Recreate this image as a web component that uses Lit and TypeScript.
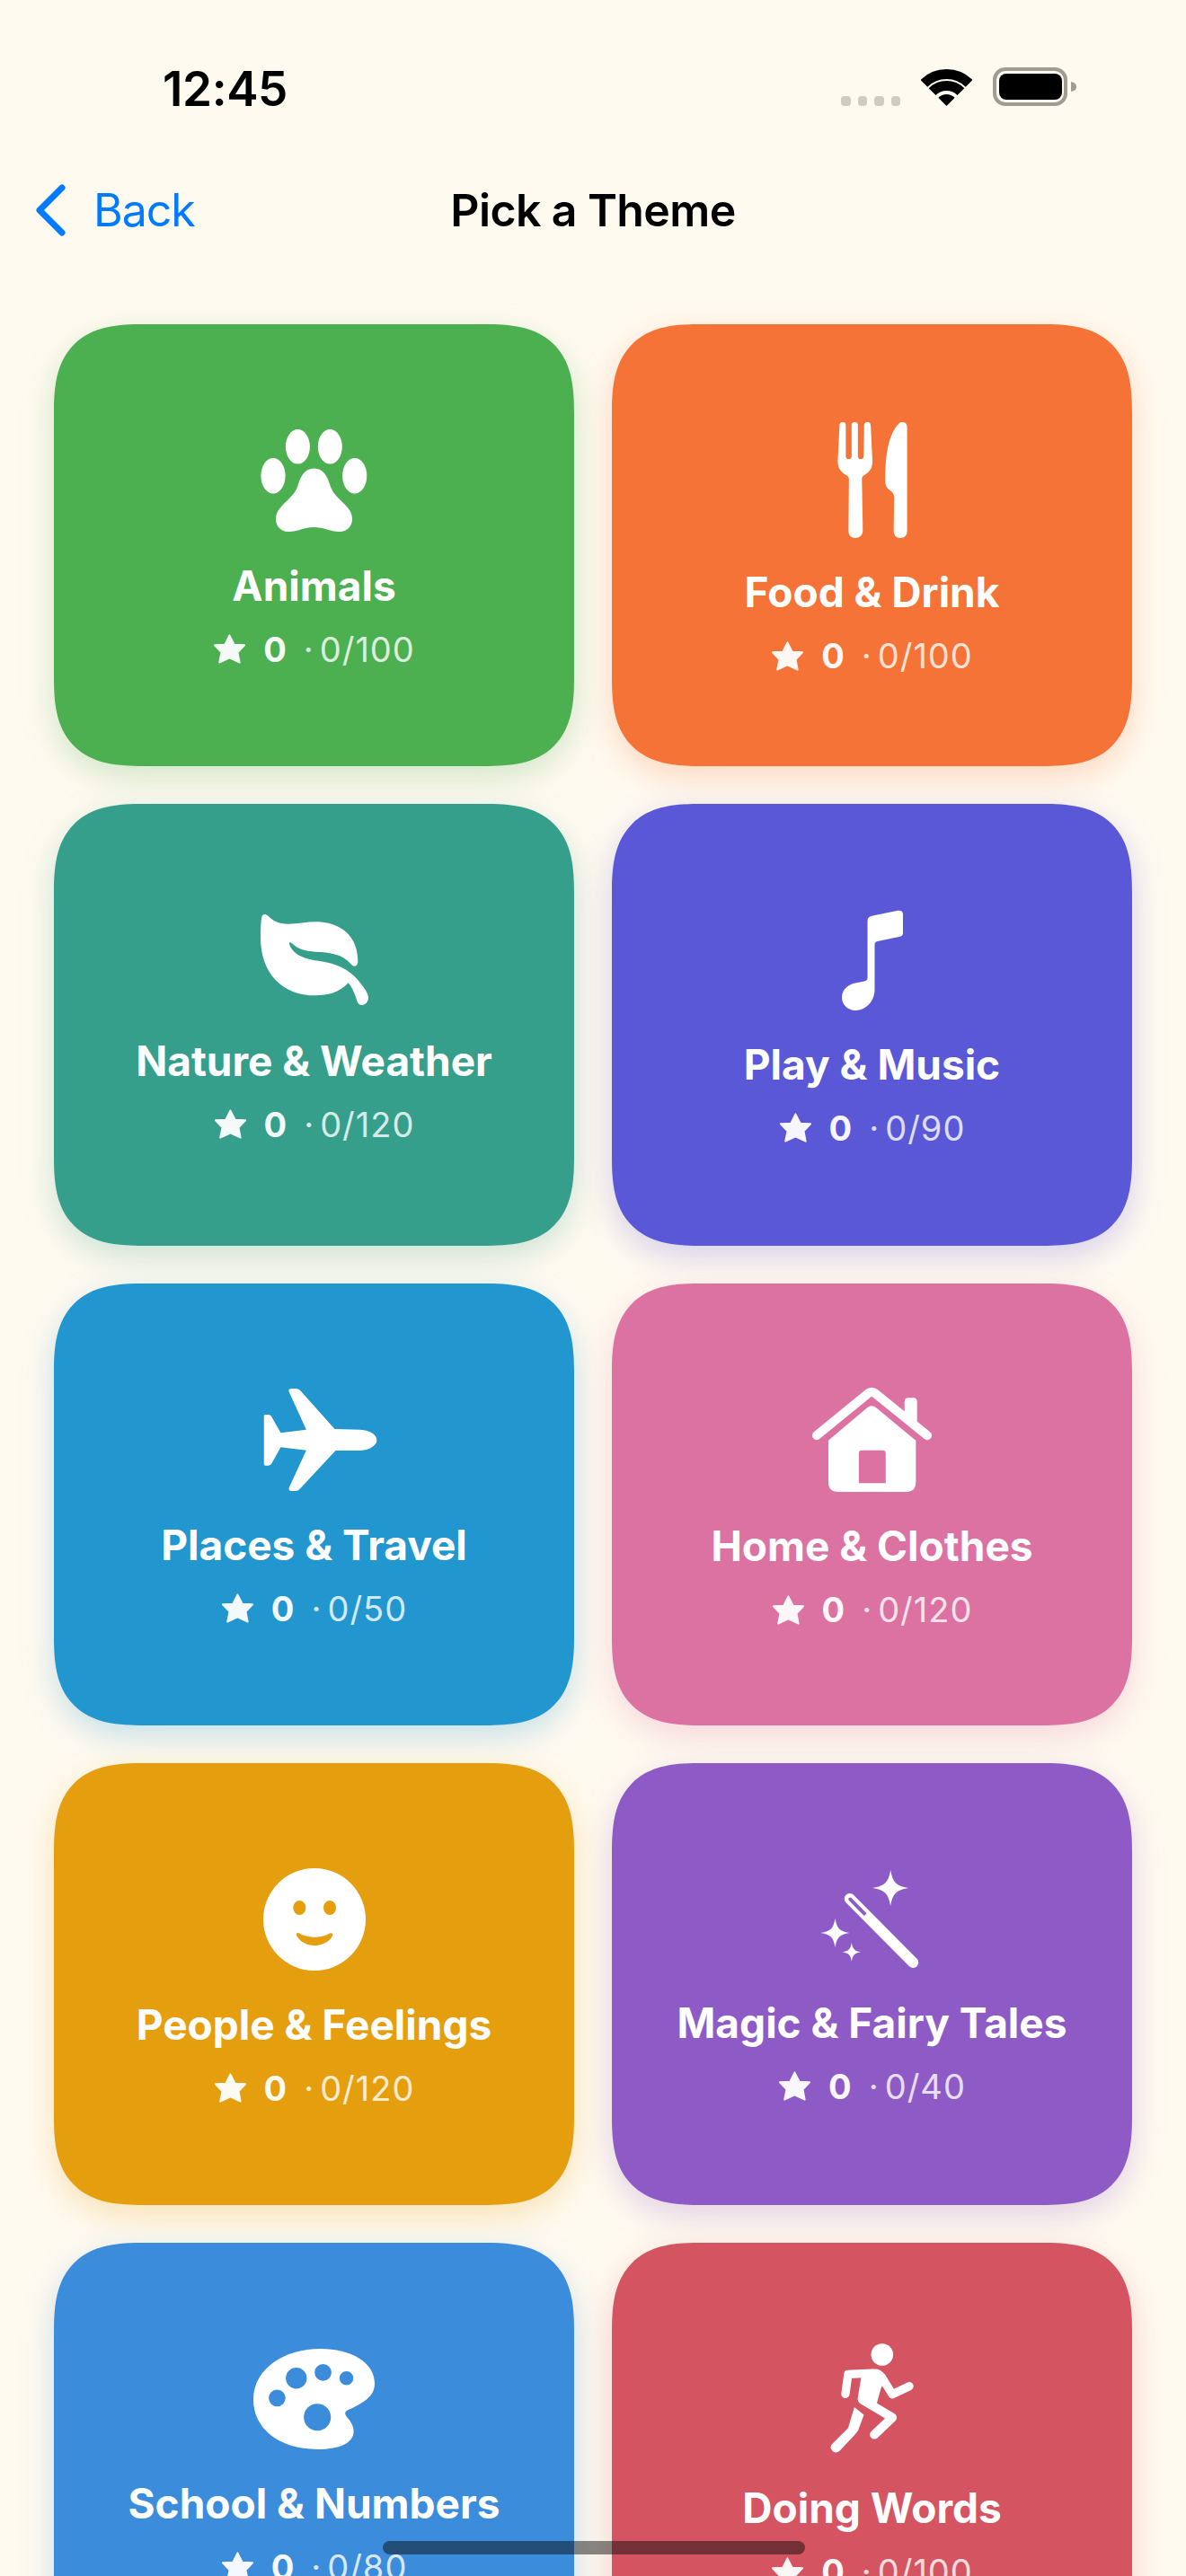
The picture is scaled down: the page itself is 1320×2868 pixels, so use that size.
import { LitElement, html, css, svg } from "lit";
import { customElement } from "lit/decorators.js";

const sparkle = (x: number, y: number, r: number) => {
  const a = r * 0.13, b = r * 0.3;
  return `M${x} ${y - r}C${x + a} ${y - b} ${x + b} ${y - a} ${x + r} ${y}C${x + b} ${y + a} ${x + a} ${y + b} ${x} ${y + r}C${x - a} ${y + b} ${x - b} ${y + a} ${x - r} ${y}C${x - b} ${y - a} ${x - a} ${y - b} ${x} ${y - r}Z`;
};
const circ = (x: number, y: number, r: number, ry = r) =>
  `M${x - r} ${y}A${r} ${ry} 0 1 0 ${x + r} ${y}A${r} ${ry} 0 1 0 ${x - r} ${y}Z`;

type Ic = { vb: string; w: number; h: number; dx?: number; art: unknown };

const ICONS: Record<string, Ic> = {
  paw: {
    vb: "0 0 119 114", w: 119, h: 114,
    art: svg`<ellipse cx="41.4" cy="19.3" rx="13.5" ry="19.3"/><ellipse cx="77.3" cy="19.3" rx="13.5" ry="19.3"/><ellipse cx="14" cy="51.7" rx="13.6" ry="19.7"/><ellipse cx="104.7" cy="51.7" rx="13.6" ry="19.7"/><path d="M59.5 43.5C70 43.5 74 52 77 61C79 68 82 72 88 78C95 85 102 90 102 100C102 108 96 114 88 114C78 114 70 109 59.5 109C49 109 41 114 31 114C23 114 17 108 17 100C17 90 24 85 31 78C37 72 40 68 42 61C45 52 49 43.5 59.5 43.5Z"/>`,
  },
  food: {
    vb: "0 0 77.5 129.5", w: 78, h: 129,
    art: svg`<path d="M2 3.5A3.5 3.5 0 0 1 9 3.5L9 38A3.2 3.2 0 0 0 15.5 38L15.5 3.5A3.5 3.5 0 0 1 22.5 3.5L22.5 38A3.2 3.2 0 0 0 29 38L29.5 3.5A3.6 3.6 0 0 1 36.8 3.5L38.8 44C38.8 52 35 56 30 59C28 60 27 61 27 64L28 121C28 126 25 129.5 19.5 129.5C14 129.5 12 126 12 121L12.5 64C12.5 61 11 60 9 59C4 56 0 52 0 44Z"/><path d="M72 0C75 0 77.5 2 77.5 5L77.5 122C77.5 126.5 74.5 129.5 70 129.5C65.5 129.5 62.5 126.5 62.5 122L63 84C63 80 61 78 58 76C54 73 53 70 53 64C53 50 54 35 57 24C59 15 65 4 68 2C69 .5 70.5 0 72 0Z"/>`,
  },
  leaf: {
    vb: "147 110 360 312", w: 120, h: 104,
    art: svg`<path d="M150 125C152 112 162 110 172 118C190 134 205 145 240 145C270 145 300 138 335 138C420 140 472 190 472 270C472 288 458 290 450 280C420 245 380 240 330 238C295 236 270 228 252 210C244 203 240 208 246 220C262 250 295 262 340 268C400 276 440 295 470 330C490 355 507 375 507 392C507 412 480 428 470 405C462 380 455 360 440 342C410 375 370 384 330 384C220 384 147 310 147 190C147 165 148 145 150 125Z"/>`,
  },
  music: {
    vb: "170 98 205 337", w: 68, h: 112,
    art: svg`<path d="M256 135C256 125 262 120 270 118L358 100C368 98 375 103 375 112L375 175C375 182 372 185 365 187L290 203C283 205 280 208 280 215L280 365C280 405 250 435 215 435C190 435 170 415 170 392C170 365 190 348 215 343L245 337C253 335 256 332 256 325Z"/>`,
  },
  plane: {
    vb: "98 78 378 342", w: 126, h: 114, dx: 6.5,
    art: svg`<path d="M182 88C180 80 186 78 195 78L205 78C212 78 218 82 222 86L335 213L420 215C455 216 476 235 476 250C476 265 455 284 420 285L338 285L220 412C216 417 210 420 204 420L192 420C184 420 180 416 183 408L240 284L155 274L125 327C122 333 118 335 112 335L105 335C100 335 98 332 98 328L98 172C98 167 100 165 105 165L112 165C118 165 122 167 125 173L155 226L240 215Z"/>`,
  },
  house: {
    vb: "71 75 400 352", w: 133, h: 117,
    art: svg`<path d="M86 238L258 97Q270 88 282 97L456 238" fill="none" stroke="#fff" stroke-width="30" stroke-linecap="round" stroke-linejoin="round"/><path d="M380 125Q380 112 393 112L409 112Q422 112 422 125L422 200L380 165Z"/><path fill-rule="evenodd" d="M125 255L255 145Q270 133 285 145L418 255L418 395Q418 427 385 427L158 427Q125 427 125 395ZM227 398L317 398L317 298Q317 288 307 288L237 288Q227 288 227 298Z"/>`,
  },
  smile: {
    vb: "98 60 342 342", w: 114, h: 114,
    art: svg`<path fill-rule="evenodd" d="${circ(269, 231, 171)}${circ(219, 192, 21, 24)}${circ(320, 192, 21, 24)}M208 282C208 276 214 275 220 278C240 288 255 290 269 290C285 290 300 288 318 278C325 275 331 277 330 284C320 305 295 318 269 318C243 318 218 305 208 282Z"/>`,
  },
  wand: {
    vb: "98 65 329 330", w: 110, h: 110, dx: -3,
    art: svg`<path fill-rule="evenodd" d="M207.7 147.3L420.7 362.3A18 18 0 0 1 395.3 387.7L182.3 172.7A18 18 0 0 1 207.7 147.3ZM201.2 157.8L252.2 209.8L243.8 218.2L192.8 166.2A6 6 0 0 1 201.2 157.8Z"/><path d="${sparkle(332, 125, 60)}"/><path d="${sparkle(147, 275, 48)}"/><path d="${sparkle(202, 339, 31)}"/>`,
  },
  palette: {
    vb: "66 45 404 335", w: 135, h: 112,
    art: svg`<path fill-rule="evenodd" d="M66 215C66 110 170 45 290 45C390 45 470 90 470 160C470 200 440 220 400 240C385 248 370 250 372 262C375 275 400 290 400 320C400 360 350 380 280 380C150 380 66 310 66 215Z${circ(209, 143, 35)}${circ(298, 124, 28)}${circ(376, 143, 23)}${circ(145, 209, 28)}${circ(279, 273, 45)}"/>`,
  },
  run: {
    vb: "132 57 280 369", w: 93, h: 123,
    art: svg`<circle cx="306" cy="94" r="37"/><g fill="none" stroke="#fff" stroke-linecap="round" stroke-linejoin="round"><path d="M183 226L192 160L275 156" stroke-width="28"/><path d="M305 170L340 227L397 200" stroke-width="28"/><path d="M240 245L340 305L280 362" stroke-width="30"/></g><path d="M240 146L288 142Q310 148 320 170L302 208L288 258L240 262Q220 250 225 235Z"/><path d="M213 270L245 296L226 347Q222 355 215 362L165 415Q150 430 138 415Q128 402 140 392L192 340Z"/>`,
  },
};

const THEMES = [
  { t: "Animals", i: "paw", c: "#4CAF50", n: "0/100" },
  { t: "Food & Drink", i: "food", c: "#F57336", n: "0/100" },
  { t: "Nature & Weather", i: "leaf", c: "#359F8C", n: "0/120" },
  { t: "Play & Music", i: "music", c: "#5A58D6", n: "0/90" },
  { t: "Places & Travel", i: "plane", c: "#2196CF", n: "0/50" },
  { t: "Home & Clothes", i: "house", c: "#DB72A1", n: "0/120" },
  { t: "People & Feelings", i: "smile", c: "#E59E0E", n: "0/120" },
  { t: "Magic & Fairy Tales", i: "wand", c: "#8E5BC6", n: "0/40" },
  { t: "School & Numbers", i: "palette", c: "#3B8CDB", n: "0/80" },
  { t: "Doing Words", i: "run", c: "#D45461", n: "0/100" },
];

@customElement("app-root")
export class AppRoot extends LitElement {
  static styles = css`
    :host {
      display: block;
      position: relative;
      height: 2868px;
      overflow: hidden;
      background: #fffaf0;
      font-family: Inter, "Liberation Sans", sans-serif;
      color: #000;
    }
    .status {
      display: flex;
      justify-content: space-between;
      align-items: flex-start;
      padding: 67px 122px 0 181px;
      height: 198px;
      box-sizing: border-box;
    }
    .time {
      font-size: 53px;
      font-weight: 600;
      line-height: 64px;
      letter-spacing: -0.4px;
    }
    .status-icons {
      display: flex;
      align-items: flex-end;
      margin-top: 8px;
    }
    .dots { display: flex; gap: 8px; margin-right: 23px; }
    .dots i { width: 10.5px; height: 11px; border-radius: 4px; background: #cfcbc1; display: block; }
    .wifi { margin-right: 23px; display: block; }
    .batt { display: block; }
    .nav {
      display: grid;
      grid-template-columns: 1fr auto 1fr;
      align-items: center;
      height: 72px;
      padding: 0 40px;
    }
    .back {
      display: flex;
      align-items: center;
      gap: 31px;
      color: #007aff;
      font-size: 50px;
      line-height: 60px;
      letter-spacing: -1px;
    }
    .back svg { display: block; }
    .title {
      font-size: 50px;
      font-weight: 600;
      line-height: 60px;
      letter-spacing: -0.6px;
    }
    .grid {
      display: grid;
      grid-template-columns: 1fr 1fr;
      gap: 42px;
      padding: 0 60px;
      margin-top: 91px;
    }
    .card {
      height: 492px;
      box-sizing: border-box;
      padding-top: 13px;
      border-radius: 100px;
      corner-shape: superellipse(1.45);
      background: var(--c);
      box-shadow: 0 12px 36px color-mix(in srgb, var(--c) 26%, transparent);
      display: flex;
      flex-direction: column;
      align-items: center;
      justify-content: center;
      color: #fff;
    }
    .icon { display: block; fill: #fff; margin-bottom: 27px; }
    .name {
      font-size: 46px;
      font-weight: 700;
      line-height: 66px;
      white-space: nowrap;
    }
    .stats {
      display: flex;
      align-items: center;
      margin-top: 11px;
      height: 54px;
      font-size: 38px;
      line-height: 54px;
      white-space: nowrap;
    }
    .stats svg { display: block; opacity: 0.95; margin-right: 19px; }
    .stats b { font-weight: 700; opacity: 0.95; margin-right: 19px; }
    .stats span { opacity: 0.8; }
    .stats .sep { margin-right: 7px; }
    .stats .num { letter-spacing: 1px; }
    .home {
      position: absolute;
      left: 426px;
      bottom: 24px;
      width: 470px;
      height: 15px;
      border-radius: 8px;
      background: rgba(10, 10, 10, 0.48);
    }
  `;

  render() {
    return html`
      <div class="status">
        <div class="time">12:45</div>
        <div class="status-icons">
          <div class="dots"><i></i><i></i><i></i><i></i></div>
          <svg class="wifi" width="57" height="41" viewBox="0 0 57 41">
            <path d="M28.5 41L19.3 31.8A13 13 0 0 1 37.7 31.8Z" />
            <path d="M12.6 25.1A22.5 22.5 0 0 1 44.4 25.1" fill="none" stroke="#000" stroke-width="11" />
            <path d="M3.4 15.9A35.5 35.5 0 0 1 53.6 15.9" fill="none" stroke="#000" stroke-width="11" />
          </svg>
          <svg class="batt" width="93" height="43" viewBox="0 0 93 43">
            <rect x="2" y="2" width="79" height="39" rx="12" fill="none" stroke="#a09c94" stroke-width="4" />
            <rect x="7" y="7" width="70" height="29" rx="8" fill="#000" />
            <path d="M87 16Q93 17 93 21.5Q93 26 87 27Z" fill="#a09c94" />
          </svg>
        </div>
      </div>
      <div class="nav">
        <div class="back">
          <svg width="33" height="58" viewBox="0 0 33 58">
            <path d="M29 4L4 29L29 54" fill="none" stroke="#007aff" stroke-width="7" stroke-linecap="round" stroke-linejoin="round" />
          </svg>
          Back
        </div>
        <div class="title">Pick a Theme</div>
        <div></div>
      </div>
      <div class="grid">
        ${THEMES.map((t) => {
          const ic = ICONS[t.i];
          return html`
            <div class="card" style="--c:${t.c}">
              <svg class="icon" width=${ic.w} height=${ic.h} viewBox=${ic.vb} style="transform:translateX(${ic.dx ?? 0}px)">${ic.art}</svg>
              <div class="name">${t.t}</div>
              <div class="stats">
                <svg width="37" height="35" viewBox="-1 -1 39 36" fill="#fff"><path d="M18.4 1L13 12L1 12.5L9 21L6.5 33L18.4 27.5L30.3 33L28 21L36 12.5L24 12Z" stroke="#fff" stroke-width="2" stroke-linejoin="round"/></svg>
                <b>0</b>
                <span class="sep">·</span>
                <span class="num">${t.n}</span>
              </div>
            </div>
          `;
        })}
      </div>
      <div class="home"></div>
    `;
  }
}
